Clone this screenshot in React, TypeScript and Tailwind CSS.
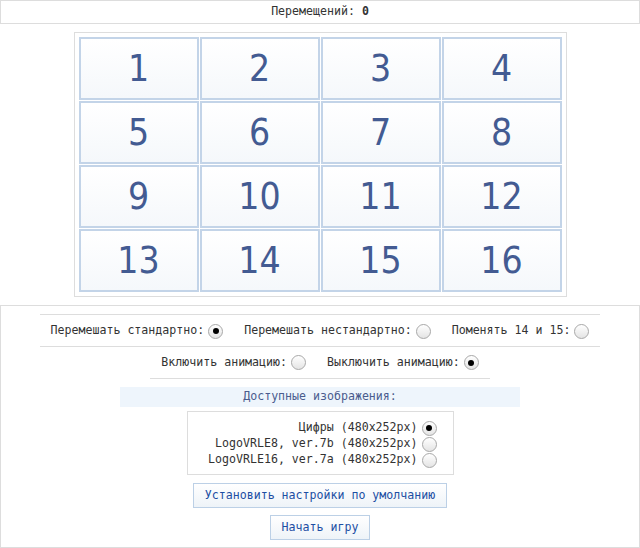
import React from 'react';

const mono = "font-['DejaVu_Sans_Mono',monospace]";

function Radio({ checked }: { checked?: boolean }) {
  return (
    <span className="inline-flex items-center justify-center w-[15px] h-[15px] rounded-full border border-[#a8a8a8] bg-gradient-to-b from-[#ffffff] to-[#e4e4e4] shrink-0">
      {checked && <span className="w-[6px] h-[6px] rounded-full bg-black" />}
    </span>
  );
}

function Option({ label, checked }: { label: string; checked?: boolean }) {
  return (
    <label className="flex items-center gap-[4px] h-[16px]">
      <span>{label}</span>
      <Radio checked={checked} />
    </label>
  );
}

export default function App() {
  const tiles = Array.from({ length: 16 }, (_, i) => i + 1);
  return (
    <div className={`${mono} text-[11.6px] text-[#333] bg-white w-[640px] h-[548px]`}>
      <div className="h-[24px] border border-[#ddd] flex items-center justify-center">
        Перемещений:&nbsp;<b>0</b>
      </div>

      <div className="mt-[8px] mx-auto w-[493px] border border-[#ddd] p-[4px]">
        <div className="grid grid-cols-[repeat(4,120px)] grid-rows-[repeat(4,63px)] gap-[1px]">
          {tiles.map((n) => (
            <div
              key={n}
              className="border-2 border-[#c3d4e8] bg-gradient-to-b from-[#ffffff] to-[#f5f8fb] flex items-center justify-center font-['DejaVu_Sans_Condensed','DejaVu_Sans',sans-serif] text-[37px] text-[#435b92]"
            >
              {n}
            </div>
          ))}
        </div>
      </div>

      <div className="mt-[8px] border border-[#ddd] h-[243px] flex flex-col items-center pt-[8px]">
        <div className="w-[560px] border-t border-[#ddd]" />
        <div className="h-[31px] flex items-center gap-[21px] pt-[1px]">
          <Option label="Перемешать стандартно:" checked />
          <Option label="Перемешать нестандартно:" />
          <Option label="Поменять 14 и 15:" />
        </div>
        <div className="w-[560px] border-t border-[#ddd]" />
        <div className="h-[31px] flex items-center gap-[21px]">
          <Option label="Включить анимацию:" />
          <Option label="Выключить анимацию:" checked />
        </div>
        <div className="w-[340px] border-t border-[#ddd]" />
        <div className="mt-[8px] w-[400px] h-[20px] bg-[#eef5fc] text-[#4a5c8e] flex items-center justify-center">
          Доступные изображения:
        </div>
        <div className="mt-[4px] w-[267px] h-[64px] border border-[#ddd] flex flex-col items-end justify-center pr-[16px] pt-[2px]">
          <Option label="Цифры (480x252px)" checked />
          <Option label="LogoVRLE8, ver.7b (480x252px)" />
          <Option label="LogoVRLE16, ver.7a (480x252px)" />
        </div>
        <button className="mt-[8px] w-[254px] h-[25px] border border-[#bcd0e6] bg-gradient-to-b from-[#ffffff] to-[#eef3f8] text-[#1c4ea3] flex items-center justify-center">
          Установить настройки по умолчанию
        </button>
        <button className="mt-[7px] w-[100px] h-[25px] border border-[#bcd0e6] bg-gradient-to-b from-[#ffffff] to-[#eef3f8] text-[#1c4ea3] flex items-center justify-center">
          Начать игру
        </button>
      </div>
    </div>
  );
}
